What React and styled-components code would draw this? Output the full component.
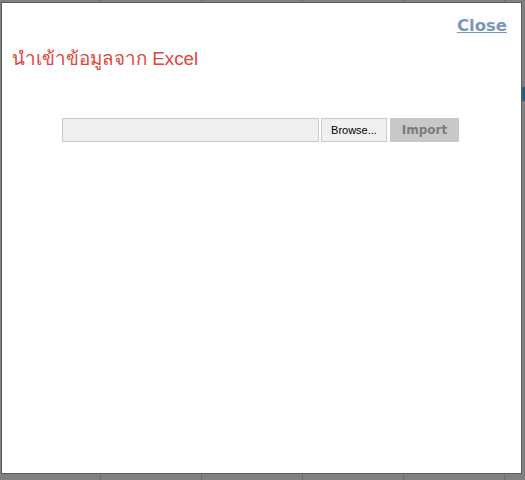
import React from 'react'
import styled, { createGlobalStyle } from 'styled-components'

const GlobalStyle = createGlobalStyle`
  html, body {
    margin: 0;
    padding: 0;
    background: #808080;
  }
`

const Page = styled.div`
  position: relative;
  width: 525px;
  height: 480px;
  overflow: hidden;
  background: #808080;
`

const Backdrop = styled.div`
  display: flex;
  height: 100%;
`

const Cell = styled.div`
  width: ${p => p.w}px;
  flex-shrink: 0;
  border-right: 1px solid #6e6e6e;
`

const Sliver = styled.div`
  position: absolute;
  left: 522px;
  top: 87px;
  width: 3px;
  height: 14px;
  background: #1f5f86;
`

const Dialog = styled.div`
  position: absolute;
  left: 1px;
  top: 2px;
  width: 521px;
  height: 472px;
  box-sizing: border-box;
  background: #fff;
  border: 1px solid #5c5c5c;
  display: flex;
  flex-direction: column;
`

const TopBar = styled.div`
  display: flex;
  justify-content: flex-end;
  padding: 13px 14px 0 0;
`

const CloseLink = styled.a`
  font-family: Tahoma, "DejaVu Sans", "Liberation Sans", sans-serif;
  font-weight: bold;
  font-size: 16.5px;
  color: #7a96b8;
  text-decoration: underline;
  cursor: pointer;
`

const Title = styled.h2`
  margin: 8px 0 0 10px;
  font-family: Tahoma, "Liberation Sans", "Noto Sans", sans-serif;
  font-weight: normal;
  font-size: 18.8px;
  color: #e2453a;
`

const UploadRow = styled.div`
  display: flex;
  align-items: center;
  margin: 45px 0 0 60px;
`

const FileBox = styled.div`
  width: 257px;
  height: 24px;
  box-sizing: border-box;
  background: #efefef;
  border: 1px solid #c9c9c9;
`

const BrowseButton = styled.button`
  margin-left: 2px;
  width: 66px;
  height: 24px;
  box-sizing: border-box;
  background: #f0f0f0;
  border: 1px solid #cacaca;
  font-family: "Liberation Sans", Arial, sans-serif;
  font-size: 11px;
  color: #000;
  padding: 0;
`

const ImportButton = styled.button`
  margin-left: 3px;
  width: 69px;
  height: 24px;
  background: #c8c8c8;
  border: none;
  font-family: Tahoma, "DejaVu Sans", sans-serif;
  font-weight: bold;
  font-size: 12px;
  color: #7b7b7b;
  padding: 0;
`

const cols = [100, 100, 100, 100, 100, 25]

export default function App() {
  return (
    <Page>
      <GlobalStyle />
      <Backdrop>
        {cols.map((w, i) => (
          <Cell key={i} w={w} />
        ))}
      </Backdrop>
      <Sliver />
      <Dialog>
        <TopBar>
          <CloseLink>Close</CloseLink>
        </TopBar>
        <Title>นำเข้าข้อมูลจาก Excel</Title>
        <UploadRow>
          <FileBox />
          <BrowseButton>Browse...</BrowseButton>
          <ImportButton>Import</ImportButton>
        </UploadRow>
      </Dialog>
    </Page>
  )
}
